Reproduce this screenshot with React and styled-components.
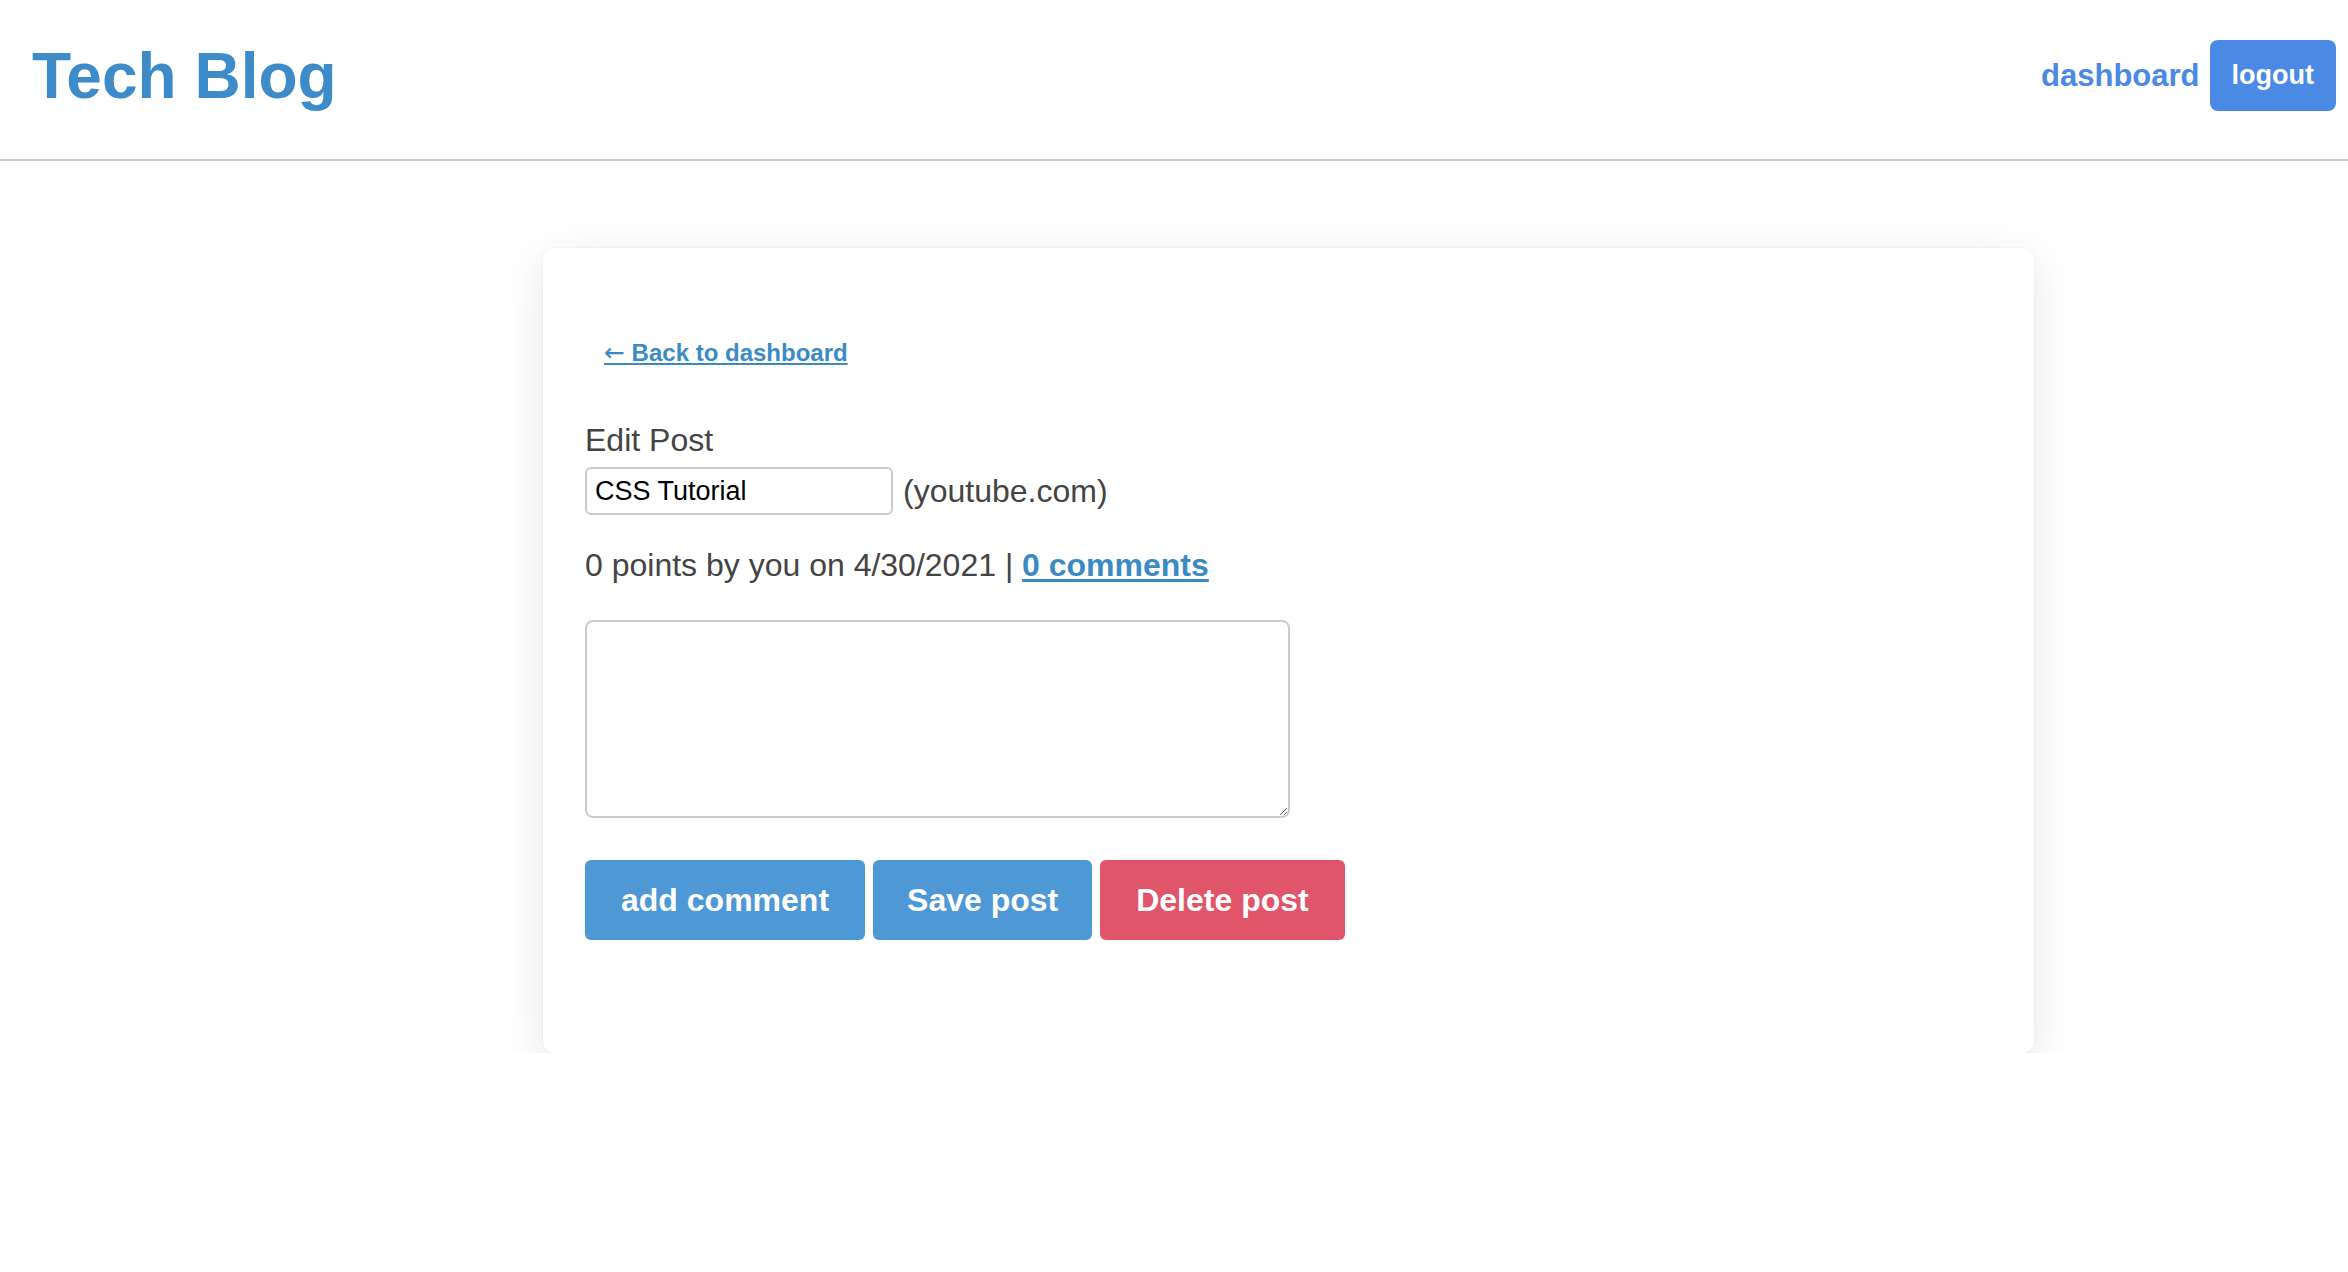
import React from "react";
import styled, { createGlobalStyle } from "styled-components";

const GlobalStyle = createGlobalStyle`
  html, body {
    margin: 0;
    padding: 0;
    background: #fff;
    font-family: "Liberation Sans", Arial, Helvetica, sans-serif;
    color: #444;
  }
  * {
    box-sizing: border-box;
  }
`;

const Header = styled.header`
  height: 161px;
  padding: 0 12px 8px 32px;
  border-bottom: 2px solid #cccccc;
  display: flex;
  align-items: center;
  justify-content: space-between;
`;

const Logo = styled.h1`
  margin: 0;
  font-size: 64px;
  line-height: 1;
  font-weight: 700;
  color: #3d8cc9;
`;

const Nav = styled.nav`
  display: flex;
  align-items: center;
  gap: 10px;
`;

const NavLink = styled.a`
  font-size: 31px;
  font-weight: 700;
  color: #4a89e4;
  text-decoration: none;
`;

const LogoutButton = styled.button`
  height: 71px;
  padding: 0 22px;
  border: none;
  border-radius: 8px;
  background: #4a89e4;
  color: #fff;
  font-family: inherit;
  font-size: 27px;
  font-weight: 700;
`;

const Main = styled.main`
  padding: 87px 0 0 543px;
`;

const Card = styled.section`
  width: 1491px;
  min-height: 805px;
  padding: 90px 60px 111px 42px;
  background: #fff;
  border-radius: 12px;
  box-shadow: 0 0 0 1px rgba(0, 0, 0, 0.025), 0 12px 44px rgba(0, 0, 0, 0.1);
`;

const BackLink = styled.a`
  display: inline-block;
  margin-left: 19px;
  font-size: 24px;
  line-height: 29px;
  font-weight: 700;
  color: #3a8ac6;
  text-decoration: underline;
  text-underline-offset: 2px;
`;

const Arrow = styled.span`
  font-family: "DejaVu Sans", sans-serif;
  font-weight: 400;
  font-size: 25px;
  line-height: 1;
`;

const Label = styled.div`
  margin-top: 54px;
  font-size: 32px;
  line-height: 38px;
  color: #444;
`;

const TitleRow = styled.div`
  margin-top: 8px;
  display: flex;
  align-items: center;
  gap: 10px;
`;

const TitleInput = styled.input`
  width: 308px;
  height: 48px;
  padding: 0 8px;
  border: 2px solid #cccccc;
  border-radius: 6px;
  font-family: inherit;
  font-size: 27px;
  color: #000;
  outline: none;
`;

const Domain = styled.span`
  font-size: 32px;
  color: #444;
`;

const Meta = styled.p`
  margin: 31px 0 0;
  font-size: 32px;
  line-height: 38px;
  color: #444;
`;

const CommentsLink = styled.a`
  font-weight: 700;
  color: #3a8ac6;
  text-decoration: underline;
  text-underline-offset: 3px;
`;

const CommentBox = styled.textarea`
  display: block;
  margin-top: 36px;
  width: 705px;
  height: 198px;
  border: 2px solid #cccccc;
  border-radius: 8px;
  font-family: inherit;
  font-size: 24px;
  outline: none;
`;

const Actions = styled.div`
  margin-top: 42px;
  display: flex;
  gap: 8px;
`;

const ActionButton = styled.button`
  height: 80px;
  padding: 0 ${(p) => p.$pad}px;
  border: none;
  border-radius: 6px;
  background: ${(p) => (p.$danger ? "#e0556a" : "#4f98d6")};
  color: #fff;
  font-family: inherit;
  font-size: 32px;
  font-weight: 700;
`;

export default function App() {
  return (
    <>
      <GlobalStyle />
      <Header>
        <Logo>Tech Blog</Logo>
        <Nav>
          <NavLink href="#">dashboard</NavLink>
          <LogoutButton>logout</LogoutButton>
        </Nav>
      </Header>
      <Main>
        <Card>
          <BackLink href="#">
            <Arrow>←</Arrow> Back to dashboard
          </BackLink>
          <Label>Edit Post</Label>
          <TitleRow>
            <TitleInput defaultValue="CSS Tutorial" />
            <Domain>(youtube.com)</Domain>
          </TitleRow>
          <Meta>
            0 points by you on 4/30/2021 | <CommentsLink href="#">0 comments</CommentsLink>
          </Meta>
          <CommentBox />
          <Actions>
            <ActionButton $pad={36}>add comment</ActionButton>
            <ActionButton $pad={34}>Save post</ActionButton>
            <ActionButton $danger $pad={36}>Delete post</ActionButton>
          </Actions>
        </Card>
      </Main>
    </>
  );
}
